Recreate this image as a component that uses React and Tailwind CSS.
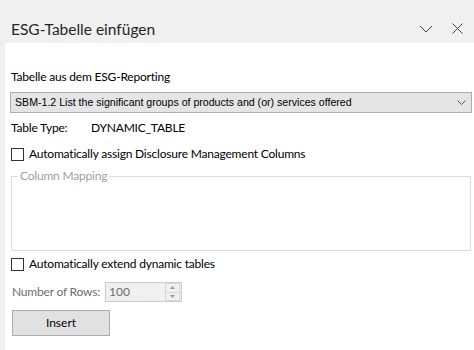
import React from 'react';

const Checkbox = ({ label }) => (
  <label className="flex items-center h-[16px]">
    <span className="w-[13px] h-[13px] border border-[#333333] bg-white shrink-0" />
    <span className="ml-[5px] text-[12px] tracking-[-0.2px] leading-[16px] text-black whitespace-nowrap">{label}</span>
  </label>
);

const App = () => {
  return (
    <div className="w-[474px] h-[350px] bg-[#f0f0f0] flex flex-col font-['Lato',sans-serif] overflow-hidden">
      <div className="h-[43px] flex items-center pt-[14px] pl-[11px] pr-[11px]">
        <h1 className="flex-1 text-[15.5px] leading-[20px] text-[#262626]">ESG-Tabelle einfügen</h1>
        <svg width="14" height="8" viewBox="0 0 14 8" className="mr-[19px]">
          <path d="M1 1 L7 7 L13 1" fill="none" stroke="#444" strokeWidth="1" />
        </svg>
        <svg width="11" height="11" viewBox="0 0 11 11">
          <path d="M0.5 0.5 L10.5 10.5 M10.5 0.5 L0.5 10.5" fill="none" stroke="#444" strokeWidth="1" />
        </svg>
      </div>

      <div className="flex-1 ml-[5px] bg-white flex flex-col">
        <p className="mt-[26px] ml-[6px] text-[12px] tracking-[-0.2px] leading-[16px] text-black">Tabelle aus dem ESG-Reporting</p>

        <div className="mt-[7px] ml-[5px] w-[462px] h-[21px] bg-[#e5e5e5] border border-[#adadad] flex items-center pl-[4px] pr-[5px]">
          <span className="flex-1 font-['Liberation_Sans',sans-serif] text-[10.6px] text-black whitespace-nowrap">
            SBM-1.2 List the significant groups of products and (or) services offered
          </span>
          <svg width="9" height="5" viewBox="0 0 9 5">
            <path d="M0.5 0.5 L4.5 4.5 L8.5 0.5" fill="none" stroke="#555" strokeWidth="1" />
          </svg>
        </div>

        <div className="mt-[7px] ml-[6px] flex text-[12px] tracking-[-0.2px] leading-[16px] text-black">
          <span className="w-[80px]">Table Type:</span>
          <span>DYNAMIC_TABLE</span>
        </div>

        <div className="mt-[10px] ml-[6px]">
          <Checkbox label="Automatically assign Disclosure Management Columns" />
        </div>

        <fieldset className="mt-[6px] ml-[6px] w-[460px] h-[83px] border border-[#dcdcdc] px-[6px]">
          <legend className="px-[2px] text-[12px] tracking-[-0.2px] leading-[16px] text-[#a0a0a0]">Column Mapping</legend>
        </fieldset>

        <div className="mt-[5px] ml-[6px]">
          <Checkbox label="Automatically extend dynamic tables" />
        </div>

        <div className="mt-[10px] ml-[7px] flex items-center">
          <span className="w-[93px] shrink-0 whitespace-nowrap text-[12px] tracking-[-0.2px] leading-[16px] text-[#6d6d6d]">Number of Rows:</span>
          <div className="w-[77px] h-[20px] bg-[#f0f0f0] border border-[#cccccc] flex items-center pl-[3px]">
            <span className="flex-1 text-[12px] leading-[16px] text-[#6d6d6d]">100</span>
            <div className="w-[15px] h-[18px] flex flex-col mr-[1px]">
              <div className="flex-1 border border-[#d6d6d6] flex items-center justify-center">
                <svg width="5" height="3" viewBox="0 0 5 3"><path d="M0 3 L2.5 0 L5 3 Z" fill="#9a9a9a" /></svg>
              </div>
              <div className="flex-1 border border-t-0 border-[#d6d6d6] flex items-center justify-center">
                <svg width="5" height="3" viewBox="0 0 5 3"><path d="M0 0 L2.5 3 L5 0 Z" fill="#9a9a9a" /></svg>
              </div>
            </div>
          </div>
        </div>

        <button className="mt-[8px] ml-[7px] w-[98px] h-[26px] bg-[#e1e1e1] border border-[#adadad] text-[12px] text-black">
          Insert
        </button>
      </div>
    </div>
  );
};

export default App;
